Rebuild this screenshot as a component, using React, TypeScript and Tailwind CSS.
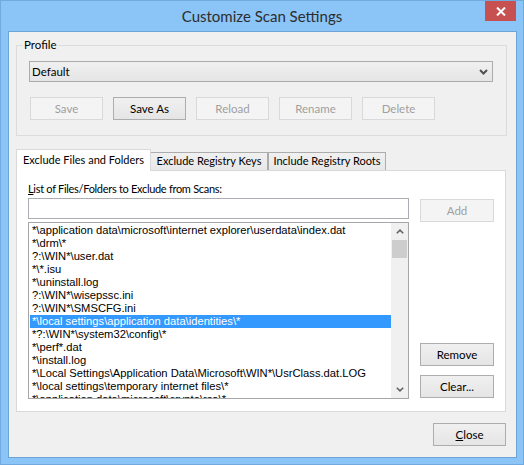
import React from "react";

const items = [
  "*\\application data\\microsoft\\internet explorer\\userdata\\index.dat",
  "*\\drm\\*",
  "?:\\WIN*\\user.dat",
  "*\\*.isu",
  "*\\uninstall.log",
  "?:\\WIN*\\wisepssc.ini",
  "?:\\WIN*\\SMSCFG.ini",
  "*\\local settings\\application data\\identities\\*",
  "*?:\\WIN*\\system32\\config\\*",
  "*\\perf*.dat",
  "*\\install.log",
  "*\\Local Settings\\Application Data\\Microsoft\\WIN*\\UsrClass.dat.LOG",
  "*\\local settings\\temporary internet files\\*",
  "*\\application data\\microsoft\\crypto\\rsa\\*",
];

function Btn({
  children,
  disabled,
  className,
}: {
  children: React.ReactNode;
  disabled?: boolean;
  className?: string;
}) {
  return (
    <div
      className={`h-[23px] flex items-center justify-center border text-[11.5px] whitespace-nowrap ${
        disabled
          ? "border-[#d9d9d9] bg-[#f4f4f4] text-[#9f9f9f]"
          : "border-[#adadad] bg-gradient-to-b from-[#f0f0f0] to-[#e5e5e5] text-black"
      } ${className ?? ""}`}
    >
      {children}
    </div>
  );
}

function Chevron({ up, className }: { up?: boolean; className?: string }) {
  return (
    <svg width="8" height="5" viewBox="0 0 8 5" className={className}>
      <path
        d={up ? "M0.8 4.3 L4 1.1 L7.2 4.3" : "M0.8 0.7 L4 3.9 L7.2 0.7"}
        fill="none"
        stroke="#606060"
        strokeWidth="1.5"
      />
    </svg>
  );
}

export default function App() {
  return (
    <div className="w-[524px] h-[465px] border border-[#72aadf] bg-[#8bc4f6] flex flex-col font-['Lato',sans-serif] text-[11.5px] text-black select-none">
      <div className="h-[30px] relative flex items-center justify-center">
        <span className="text-[15px] text-[#2d2d2d]">Customize Scan Settings</span>
        <div className="absolute right-[7px] top-0 w-[31px] h-[20px] bg-[#c75050] flex items-center justify-center">
          <svg width="10" height="9" viewBox="0 0 10 9">
            <path d="M1 0.5 L9 8.5 M9 0.5 L1 8.5" stroke="white" strokeWidth="2" />
          </svg>
        </div>
      </div>

      <div className="ml-[7px] w-[509px] h-[427px] border border-[#6ea3d6] bg-[#f0f0f0] flex flex-col">
        {/* Profile group */}
        <div className="ml-[7px] mt-[13px] w-[491px] border border-[#dcdcdc] flex flex-col pb-[15px]">
          <span className="-mt-[9px] ml-[6px] px-[1px] w-fit leading-[16px] bg-[#f0f0f0]">Profile</span>
          <div className="ml-[12px] mt-[8px] w-[464px] h-[21px] border border-[#acacac] bg-gradient-to-b from-[#f0f0f0] to-[#e5e5e5] flex items-center pl-[2px] pr-[4px]">
            <span className="flex-1">Default</span>
            <svg width="9" height="6" viewBox="0 0 9 6">
              <path d="M1 1 L4.5 4.5 L8 1" fill="none" stroke="#505050" strokeWidth="2" />
            </svg>
          </div>
          <div className="ml-[13px] mt-[15px] flex gap-[10px]">
            <Btn disabled className="w-[73px]">Save</Btn>
            <Btn className="w-[73px]">Save As</Btn>
            <Btn disabled className="w-[73px]">Reload</Btn>
            <Btn disabled className="w-[73px]">Rename</Btn>
            <Btn disabled className="w-[73px]">Delete</Btn>
          </div>
        </div>

        {/* Tabs */}
        <div className="ml-[7px] mt-[13px] w-[490px] flex flex-col">
          <div className="flex items-end h-[21px] whitespace-nowrap text-[11px]">
            <div className="relative z-10 -mb-px w-[135px] h-[22px] border border-b-0 border-[#d9d9d9] bg-white flex items-center pl-[6px] pb-[1px]">
              Exclude Files and Folders
            </div>
            <div className="w-[117px] h-[18px] border border-b-0 border-l-0 border-[#acacac] bg-gradient-to-b from-[#f0f0f0] to-[#e8e8e8] flex items-center justify-center">
              Exclude Registry Keys
            </div>
            <div className="w-[118px] h-[18px] border border-b-0 border-[#acacac] bg-gradient-to-b from-[#f0f0f0] to-[#e8e8e8] flex items-center justify-center">
              Include Registry Roots
            </div>
          </div>
          <div className="h-[242px] border border-[#d9d9d9] bg-white pl-[11px] pt-[10px]">
            <div className="leading-[16px] text-[11px] tracking-[-0.3px] whitespace-nowrap">
              <span className="underline">L</span>ist of Files/Folders to Exclude from Scans:
            </div>
            <div className="flex mt-[1px]">
              <div className="w-[381px] flex flex-col">
                <div className="h-[21px] border border-[#abadb3] bg-white" />
                <div className="mt-[3px] h-[177px] border border-[#a6a6a6] bg-white flex">
                  <div className="flex-1 pt-[1px] pl-[1px] overflow-hidden font-['Liberation_Sans',sans-serif] text-[11.2px]">
                    {items.map((t, i) => (
                      <div
                        key={i}
                        className={
                          i === 7
                            ? "h-[13px] leading-[13px] pl-[2px] bg-[#3399ff] text-white whitespace-nowrap"
                            : "h-[13px] leading-[13px] pl-[2px] whitespace-nowrap"
                        }
                      >
                        {t}
                      </div>
                    ))}
                  </div>
                  <div className="w-[17px] bg-[#f0f0f0] flex flex-col">
                    <div className="h-[17px] flex items-center justify-center">
                      <Chevron up />
                    </div>
                    <div className="mx-[1px] h-[18px] bg-[#cdcdcd]" />
                    <div className="flex-1" />
                    <div className="h-[17px] flex items-center justify-center">
                      <Chevron />
                    </div>
                  </div>
                </div>
              </div>
              <div className="ml-[11px] w-[74px] flex flex-col">
                <Btn disabled className="mt-[1px]">Add</Btn>
                <div className="flex-1" />
                <Btn>Remove</Btn>
                <Btn className="mt-[9px] mb-[1px]">Clear...</Btn>
              </div>
            </div>
          </div>
        </div>

        <Btn className="self-end mr-[10px] mt-[11px] w-[73px]">
          <span>
            <span className="underline">C</span>lose
          </span>
        </Btn>
      </div>
    </div>
  );
}
